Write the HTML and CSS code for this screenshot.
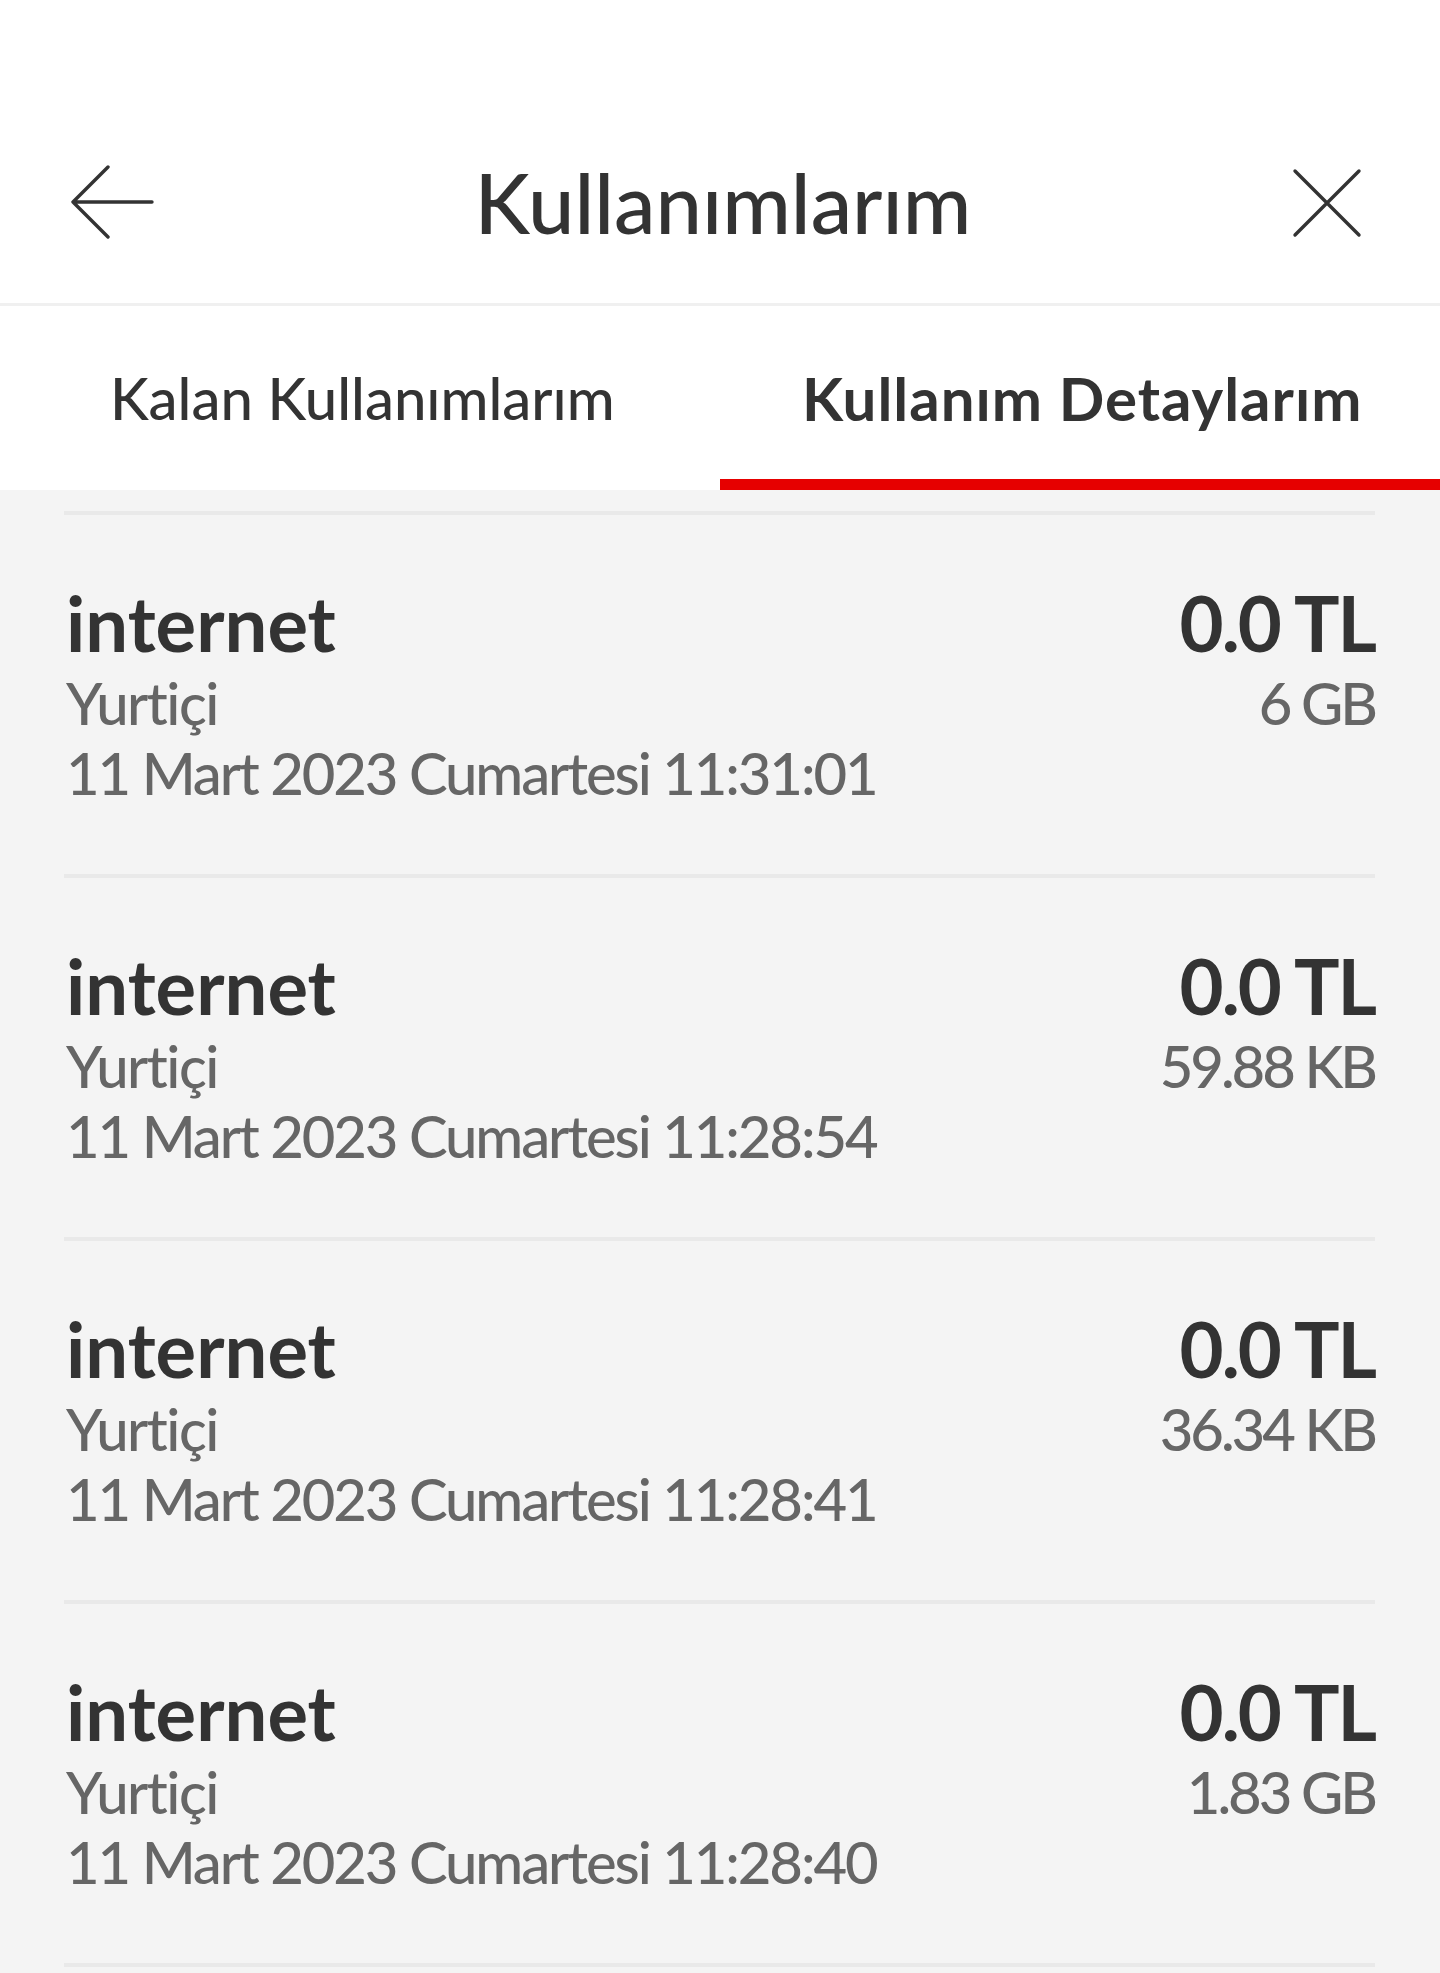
FILE: index.html
```html
<!DOCTYPE html>
<html lang="tr">
<head>
    <meta charset="UTF-8">
    <meta name="viewport" content="width=device-width, initial-scale=1.0">
    <title>Kullanımlarım</title>
    <link rel="stylesheet" href="styles.css">
</head>
<body>
    <header class="topbar">
        <button class="icon-btn" aria-label="Geri">
            <svg width="84" height="76" viewBox="0 0 84 76">
                <path d="M38 2 L3 37 L38 72 M3 37 H82" fill="none" stroke="#333" stroke-width="3.4" stroke-linecap="round" stroke-linejoin="round"/>
            </svg>
        </button>
        <h1 class="title">Kullanımlarım</h1>
        <button class="icon-btn" aria-label="Kapat">
            <svg width="70" height="70" viewBox="0 0 70 70">
                <path d="M3 3 L67 67 M67 3 L3 67" fill="none" stroke="#333" stroke-width="3.4" stroke-linecap="round"/>
            </svg>
        </button>
    </header>

    <nav class="tabs">
        <div class="tab tab-left">Kalan Kullanımlarım</div>
        <div class="tab tab-right active">Kullanım Detaylarım</div>
    </nav>

    <main class="usage-list">
        <div class="usage-item">
            <div class="usage-info">
                <div class="usage-name">internet</div>
                <div class="usage-sub">Yurtiçi</div>
                <div class="usage-sub usage-date">11 Mart 2023 Cumartesi 11:31:01</div>
            </div>
            <div class="usage-amount">
                <div class="usage-price">0.0 TL</div>
                <div class="usage-sub usage-size">6 GB</div>
            </div>
        </div>
        <div class="usage-item">
            <div class="usage-info">
                <div class="usage-name">internet</div>
                <div class="usage-sub">Yurtiçi</div>
                <div class="usage-sub usage-date">11 Mart 2023 Cumartesi 11:28:54</div>
            </div>
            <div class="usage-amount">
                <div class="usage-price">0.0 TL</div>
                <div class="usage-sub usage-size">59.88 KB</div>
            </div>
        </div>
        <div class="usage-item">
            <div class="usage-info">
                <div class="usage-name">internet</div>
                <div class="usage-sub">Yurtiçi</div>
                <div class="usage-sub usage-date">11 Mart 2023 Cumartesi 11:28:41</div>
            </div>
            <div class="usage-amount">
                <div class="usage-price">0.0 TL</div>
                <div class="usage-sub usage-size">36.34 KB</div>
            </div>
        </div>
        <div class="usage-item">
            <div class="usage-info">
                <div class="usage-name">internet</div>
                <div class="usage-sub">Yurtiçi</div>
                <div class="usage-sub usage-date">11 Mart 2023 Cumartesi 11:28:40</div>
            </div>
            <div class="usage-amount">
                <div class="usage-price">0.0 TL</div>
                <div class="usage-sub usage-size">1.83 GB</div>
            </div>
        </div>
    </main>
</body>
</html>
```

FILE: styles.css
```css
body {
    margin: 0;
    min-height: 100vh;
    background-color: #f4f4f4;
    font-family: Lato, "Noto Sans", sans-serif;
    font-weight: 500;
    color: #333;
}
.topbar {
    display: flex;
    justify-content: space-between;
    align-items: center;
    height: 200px;
    padding: 103px 78px 0 70px;
    background-color: #fff;
    border-bottom: 3px solid #f0f0f0;
}
.icon-btn {
    display: flex;
    padding: 0;
    border: none;
    background: none;
}
.title {
    margin: 0;
    font-size: 83px;
    font-weight: 500;
    line-height: 1.2;
}
.tabs {
    display: grid;
    grid-template-columns: 1fr 1fr;
    background-color: #fff;
}
.tab {
    padding: 57px 0 46px;
    font-size: 58px;
    line-height: 70px;
    white-space: nowrap;
    border-bottom: 11px solid transparent;
}
.tab-left {
    padding-left: 110px;
}
.tab-right {
    padding-left: 82px;
}
.tab.active {
    font-size: 60px;
    font-weight: 700;
    letter-spacing: 1px;
    border-bottom-color: #e60000;
}
.usage-list {
    display: block;
    padding: 21px 65px 0 64px;
}
.usage-item {
    display: flex;
    justify-content: space-between;
    padding: 63px 0 66px;
    border-top: 4px solid #e9e9e9;
}
.usage-item:last-child {
    border-bottom: 4px solid #e9e9e9;
}
.usage-info {
    padding-left: 2px;
}
.usage-amount {
    text-align: right;
}
.usage-name,
.usage-price {
    font-size: 76px;
    font-weight: 700;
    line-height: 90px;
}
.usage-price {
    letter-spacing: -2px;
}
.usage-sub {
    font-size: 58px;
    line-height: 70px;
    letter-spacing: -1.5px;
    color: #666;
    white-space: nowrap;
}
.usage-date {
    letter-spacing: -2.1px;
}
.usage-size {
    letter-spacing: -3px;
}
```
